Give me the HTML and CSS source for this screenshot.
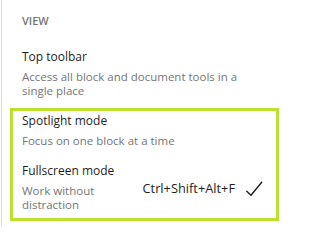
FILE: index.html
```html
<!DOCTYPE html>
<html lang="en">
<head>
<meta charset="utf-8">
<title>View menu</title>
<link rel="stylesheet" href="styles.css">
</head>
<body>
<div class="panel">
  <div class="group-label">View</div>
  <div class="item">
    <div class="info info-wide">
      <div class="title">Top toolbar</div>
      <div class="desc">Access all block and document tools in a single place</div>
    </div>
  </div>
  <div class="highlight">
    <div class="item">
      <div class="info">
        <div class="title">Spotlight mode</div>
        <div class="desc">Focus on one block at a time</div>
      </div>
    </div>
    <div class="item">
      <div class="info">
        <div class="title">Fullscreen mode</div>
        <div class="desc">Work without distraction</div>
      </div>
      <span class="shortcut">Ctrl+Shift+Alt+F</span>
      <svg class="check" width="24" height="24" viewBox="0 0 24 24" aria-hidden="true">
        <path d="M4.7 15.2 L9 19.2 L19.7 6.2" fill="none" stroke="#1e1e1e" stroke-width="1.4" stroke-linecap="round" stroke-linejoin="round"/>
      </svg>
    </div>
  </div>
</div>
</body>
</html>
```

FILE: styles.css
```css
html, body {
  margin: 0;
  padding: 0;
  background: #ffffff;
}

body {
  font-family: "Open Sans", "Noto Sans", sans-serif;
  color: #1e1e1e;
  width: 285px;
  height: 227px;
  overflow: hidden;
}

.panel {
  margin-left: 1px;
  border-left: 1px solid #dcdcdc;
  padding-top: 13px;
  height: 214px;
}

.group-label {
  padding-left: 20px;
  font-size: 11px;
  line-height: 16px;
  font-weight: 600;
  text-transform: uppercase;
  color: #757575;
  margin-bottom: 12.5px;
}

.item {
  display: flex;
  align-items: center;
  padding: 7.5px 19px 7.5px 20px;
}

.info {
  flex: 1;
  min-width: 0;
  display: flex;
  flex-direction: column;
  gap: 5px;
}

.info-wide {
  flex: 0 1 222px;
}

.title {
  font-size: 12px;
  line-height: 16px;
  color: #1e1e1e;
}

.desc {
  font-size: 11.5px;
  line-height: 14px;
  color: #757575;
}

.shortcut {
  margin-left: 8px;
  font-size: 12.8px;
  line-height: 16px;
  color: #1e1e1e;
  white-space: nowrap;
}

.check {
  margin-left: 7px;
  flex: none;
}

.highlight {
  position: relative;
}

.highlight::after {
  content: "";
  position: absolute;
  top: 2.5px;
  left: 8px;
  right: 6px;
  bottom: -1px;
  border: 3px solid #bbe02e;
  pointer-events: none;
}
```
